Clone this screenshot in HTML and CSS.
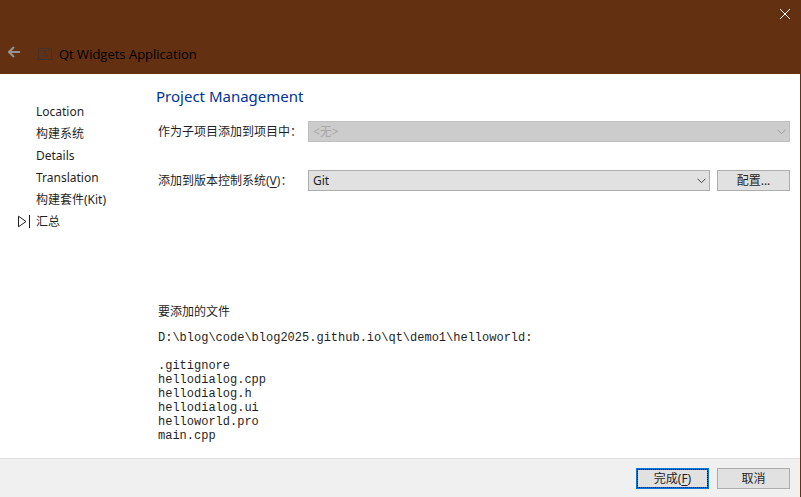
FILE: index.html
```html
<!DOCTYPE html>
<html lang="zh-CN">
<head>
<meta charset="utf-8">
<meta name="viewport" content="width=device-width, initial-scale=1">
<title>Qt Widgets Application</title>
<link rel="stylesheet" href="styles.css">
</head>
<body>
<form class="wizard">
  <header class="titlebar">
    <button class="close" type="button" aria-label="关闭">
      <svg width="10" height="10" viewBox="0 0 10 10"><path d="M0 0L10 10M10 0L0 10"/></svg>
    </button>
    <div class="heading">
      <button class="back" type="button" aria-label="返回">
        <svg width="12" height="12" viewBox="0 0 12 12"><path d="M6 1L1 6L6 11M1 6H12"/></svg>
      </button>
      <svg class="app-icon" width="16" height="12" viewBox="0 0 16 12">
        <path d="M1.500 11V.5H14.500V11M0 11.500H16"/>
        <path class="faint" d="M2 2.500H14"/>
        <path class="faint" d="M7.500 3V9L9 7.500L10 9.500L10.500 7H11Z"/>
      </svg>
      <h1 class="title">Qt Widgets Application</h1>
    </div>
  </header>
  <div class="content">
    <nav class="steps">
      <ol class="step-list">
        <li class="step">Location</li>
        <li class="step">构建系统</li>
        <li class="step">Details</li>
        <li class="step">Translation</li>
        <li class="step">构建套件(Kit)</li>
        <li class="step current" aria-current="step">
          <svg class="marker" width="13" height="13" viewBox="0 0 13 13"><path d="M1.500 1.200V11.800L9 6.500ZM12.500 0V13"/></svg>汇总</li>
      </ol>
    </nav>
    <main class="page">
      <h2 class="page-title">Project Management</h2>
      <div class="row">
        <label class="label" for="project">作为子项目添加到项目中：</label>
        <div class="combo">
          <select class="select" id="project" disabled><option>&lt;无&gt;</option></select>
          <svg class="chevron" width="9" height="6" viewBox="0 0 9 6"><path d="M.5 .7L4.500 4.700L8.500 .7"/></svg>
        </div>
      </div>
      <div class="row">
        <label class="label" for="vcs">添加到版本控制系统(<u>V</u>)：</label>
        <div class="combo">
          <select class="select" id="vcs"><option>Git</option></select>
          <svg class="chevron" width="9" height="6" viewBox="0 0 9 6"><path d="M.5 .7L4.500 4.700L8.500 .7"/></svg>
        </div>
        <button class="button" type="button">配置...</button>
      </div>
      <section class="files">
        <h3 class="files-title">要添加的文件</h3>
        <pre class="file-list">D:\blog\code\blog2025.github.io\qt\demo1\helloworld:

.gitignore
hellodialog.cpp
hellodialog.h
hellodialog.ui
helloworld.pro
main.cpp</pre>
      </section>
    </main>
  </div>
  <footer class="actions">
    <button class="button primary" type="submit">完成(<u>F</u>)</button>
    <button class="button" type="button">取消</button>
  </footer>
</form>
</body>
</html>
```
FILE: styles.css
```css
* {
  box-sizing: border-box;
}

body {
  margin: 0;
  color: #1f1f1f;
  font: 12px/16px "Noto Sans", "Noto Sans CJK SC", sans-serif;
}

svg {
  fill: none;
  stroke: currentColor;
}

h1, h2, h3, ol, pre {
  margin: 0;
  padding: 0;
  font-size: inherit;
  font-weight: normal;
}

.wizard {
  display: flex;
  flex-direction: column;
  min-height: 100vh;
  background: #fff;
  border-right: 1px solid #633012;
}

.titlebar {
  display: flex;
  flex-direction: column;
  height: 74px;
  margin-right: -1px;
  padding: 0 8px;
  background: #633012;
}

.close, .back {
  display: flex;
  align-items: center;
  justify-content: center;
  padding: 0;
  border: 0;
  background: none;
}

.close {
  align-self: flex-end;
  width: 16px;
  height: 28px;
  color: #fff;
}

.close svg {
  overflow: visible;
}

.heading {
  display: flex;
  align-items: center;
  margin-top: 16px;
  height: 20px;
}

.back {
  width: 12px;
  padding-bottom: 4px;
  color: #969390;
}

.back svg {
  stroke-width: 2;
}

.app-icon {
  margin-left: 17px;
  color: #42322a;
}

.faint {
  opacity: 0.6;
}

.title {
  margin-left: 6px;
  color: #000;
  font-family: "Open Sans", sans-serif;
  font-size: 13px;
}

.content {
  display: flex;
  flex: 1;
}

.steps {
  width: 156px;
  padding: 27px 0 0 36px;
}

.step-list {
  list-style: none;
}

.step {
  position: relative;
  line-height: 22px;
}

.marker {
  position: absolute;
  top: 4px;
  left: -19px;
}

.page {
  flex: 1;
  padding: 12px 10px 13px 0;
}

.page-title {
  margin-bottom: 14px;
  color: #003399;
  font-size: 15px;
  line-height: 21px;
}

.row {
  display: flex;
  align-items: center;
  gap: 7px;
  margin-bottom: 28px;
  padding-left: 2px;
}

.label {
  width: 143px;
  white-space: nowrap;
}

u {
  text-underline-offset: 2px;
}

.combo {
  display: grid;
  flex: 1;
  align-items: center;
}

.select {
  grid-area: 1 / 1;
  width: 100%;
  height: 21px;
  padding: 0 4px;
  appearance: none;
  border: 1px solid #adadad;
  border-radius: 0;
  background: #e1e1e1;
  color: #1f1f1f;
  font: inherit;
}

.select:disabled {
  border-color: #bfbfbf;
  background: #ccc;
  color: #a8a8a8;
  opacity: 1;
}

.chevron {
  grid-area: 1 / 1;
  justify-self: end;
  margin-right: 4px;
  color: #444;
  pointer-events: none;
}

.select:disabled + .chevron {
  color: #a0a0a0;
}

.button {
  width: 73px;
  height: 21px;
  padding: 0;
  border: 1px solid #adadad;
  background: #e1e1e1;
  color: #1f1f1f;
  font: inherit;
}

.primary {
  border: 1px solid #0078d7;
  box-shadow: inset 0 0 0 1px #0078d7;
  outline: 1px dotted #000;
  outline-offset: -2px;
}

.files {
  margin-top: 113px;
  padding-left: 2px;
}

.files-title {
  margin-bottom: 11px;
}

.file-list {
  font: 12px/14px "Liberation Mono", monospace;
}

.actions {
  display: flex;
  justify-content: flex-end;
  gap: 8px;
  padding: 9px 10px 8px;
  border-top: 1px solid #dfdfdf;
  background: #f0f0f0;
}
```
